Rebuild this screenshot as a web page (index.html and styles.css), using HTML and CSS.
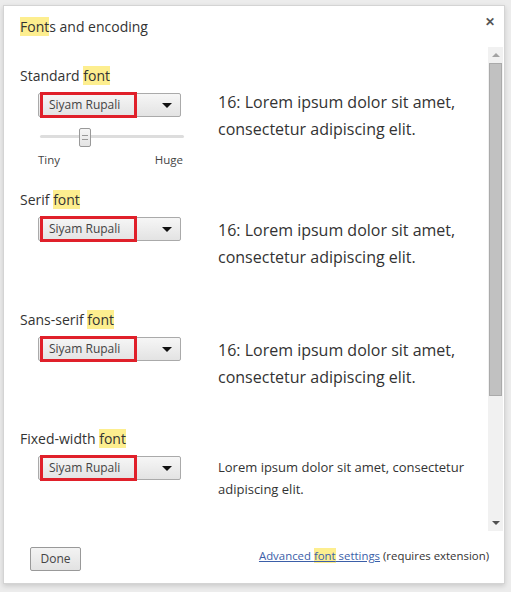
FILE: index.html
```html
<!DOCTYPE html>
<html>
<head>
<meta charset="utf-8">
<link rel="stylesheet" href="styles.css">
</head>
<body>
<div class="dialog">
  <div class="header">
    <h1 class="title"><span class="hl">Font</span>s and encoding</h1>
    <span class="close">&#x2715;</span>
  </div>
  <div class="body">
    <div class="content">
      <section class="sec sec-std">
        <div class="label">Standard <span class="hl">font</span></div>
        <div class="row">
          <div class="controls">
            <div class="select"><span class="val">Siyam Rupali</span><span class="caret"></span></div>
            <div class="slider"><div class="track"></div><div class="knob"></div></div>
            <div class="ticks"><span>Tiny</span><span>Huge</span></div>
          </div>
          <div class="sample">16: Lorem ipsum dolor sit amet, consectetur adipiscing elit.</div>
        </div>
      </section>
      <section class="sec sec-serif">
        <div class="label">Serif <span class="hl">font</span></div>
        <div class="row">
          <div class="controls">
            <div class="select"><span class="val">Siyam Rupali</span><span class="caret"></span></div>
          </div>
          <div class="sample">16: Lorem ipsum dolor sit amet, consectetur adipiscing elit.</div>
        </div>
      </section>
      <section class="sec sec-sans">
        <div class="label">Sans-serif <span class="hl">font</span></div>
        <div class="row">
          <div class="controls">
            <div class="select"><span class="val">Siyam Rupali</span><span class="caret"></span></div>
          </div>
          <div class="sample">16: Lorem ipsum dolor sit amet, consectetur adipiscing elit.</div>
        </div>
      </section>
      <section class="sec sec-fixed">
        <div class="label">Fixed-width <span class="hl">font</span></div>
        <div class="row">
          <div class="controls">
            <div class="select"><span class="val">Siyam Rupali</span><span class="caret"></span></div>
          </div>
          <div class="sample small">Lorem ipsum dolor sit amet, consectetur adipiscing elit.</div>
        </div>
      </section>
    </div>
    <div class="scrollbar">
      <div class="arrow up"></div>
      <div class="thumb"></div>
      <div class="rest"></div>
      <div class="arrow down"></div>
    </div>
  </div>
  <div class="footer">
    <button class="done">Done</button>
    <div class="adv"><a href="#" class="link">Advanced <span class="hl">font</span> settings</a> (requires extension)</div>
  </div>
</div>
</body>
</html>
```
FILE: styles.css
```css
*, *::before, *::after { box-sizing: border-box; }
html, body { margin: 0; padding: 0; }
body {
  background: #ececec;
  font-family: "Open Sans", "Noto Sans", sans-serif;
  color: #333;
  width: 511px;
  height: 592px;
  padding: 5px 6px 8px 3px;
}
.dialog {
  background: #fff;
  width: 502px;
  height: 579px;
  border: 1px solid #d4d4d4;
  box-shadow: 0 2px 5px rgba(0,0,0,0.15);
  display: flex;
  flex-direction: column;
}
.header {
  display: flex;
  justify-content: space-between;
  align-items: flex-start;
  padding: 11px 9px 0 16px;
  height: 41px;
}
.title {
  margin: 0;
  font-weight: normal;
  font-size: 14px;
  line-height: 20px;
  color: #333;
}
.hl { background: #fdee8f; }
.close {
  font-size: 12px;
  font-weight: bold;
  color: #555;
  line-height: 12px;
  margin-top: -1px;
}
.body {
  display: flex;
  height: 484px;
}
.content {
  flex: 1;
  padding: 19px 0 0 16px;
  overflow: hidden;
}
.label {
  font-size: 14px;
  line-height: 20px;
  color: #333;
}
.row {
  display: flex;
  margin-top: 7px;
}
.controls {
  width: 180px;
  padding-left: 18px;
}
.select {
  position: relative;
  width: 143px;
  height: 24px;
  border: 1px solid #aaa;
  border-radius: 2px;
  background: linear-gradient(#f6f6f6, #e3e3e3);
  display: flex;
  align-items: center;
  justify-content: space-between;
  padding: 0 8px 0 10px;
}
.select::before {
  content: "";
  position: absolute;
  left: 1px;
  top: -2px;
  width: 97px;
  height: 26px;
  border: 3px solid #e0202a;
}
.val {
  font-size: 12px;
  color: #444;
  line-height: 14px;
}
.caret {
  width: 0; height: 0;
  border-left: 5px solid transparent;
  border-right: 5px solid transparent;
  border-top: 5px solid #111;
}
.slider {
  position: relative;
  height: 30px;
  width: 144px;
  margin-left: 2px;
  margin-top: 5px;
}
.track {
  position: absolute;
  left: 0; right: 0;
  top: 13px;
  height: 3px;
  background: #ddd;
  border-radius: 2px;
}
.knob {
  position: absolute;
  left: 39px;
  top: 6px;
  width: 12px;
  height: 19px;
  border: 1px solid #999;
  border-radius: 2px;
  background: linear-gradient(#f5f5f5, #e4e4e4);
}
.knob::after {
  content: "";
  position: absolute;
  left: 2px; right: 2px;
  top: 6px;
  height: 5px;
  border-top: 1px solid #999;
  border-bottom: 1px solid #999;
}
.ticks {
  display: flex;
  justify-content: space-between;
  width: 145px;
  font-size: 11.5px;
  line-height: 16px;
  color: #444;
}
.sample {
  padding-left: 18px;
  width: 280px;
  font-size: 16px;
  line-height: 27px;
  color: #333;
  margin-top: -4px;
}
.sec-serif .sample, .sec-sans .sample { margin-top: 0; }
.sample.small {
  font-size: 13px;
  line-height: 22px;
  margin-top: 0;
}
.sec-std { margin-bottom: 22px; }
.sec-serif { height: 120px; }
.sec-sans { height: 119px; }

.scrollbar {
  width: 15px;
  margin-right: 1px;
  background: #f1f1f1;
  display: flex;
  flex-direction: column;
  align-items: center;
}
.arrow {
  height: 16px;
  width: 15px;
  display: flex;
  align-items: center;
  justify-content: center;
}
.arrow::after {
  content: "";
  width: 0; height: 0;
  border-left: 4px solid transparent;
  border-right: 4px solid transparent;
}
.arrow.up::after { border-bottom: 4px solid #a3a3a3; }
.arrow.down::after { border-top: 4px solid #505050; }
.thumb {
  width: 13px;
  height: 333px;
  background: #c1c1c1;
  border: 1px solid #aaa;
}
.rest { flex: 1; }
.footer {
  flex: 1;
  display: flex;
  justify-content: space-between;
  align-items: center;
  padding: 0 15px 0 26px;
}
.done {
  width: 51px;
  height: 24px;
  border: 1px solid #999;
  border-radius: 2px;
  background: linear-gradient(#f3f3f3, #e2e2e2);
  font-family: "Open Sans", "Noto Sans", sans-serif;
  font-size: 12px;
  color: #444;
  padding: 0;
  margin-top: 3px;
}
.adv {
  font-size: 11.4px;
  color: #333;
  margin-top: -4px;
}
.link {
  color: #3b5ea8;
  text-decoration: underline;
}
```
